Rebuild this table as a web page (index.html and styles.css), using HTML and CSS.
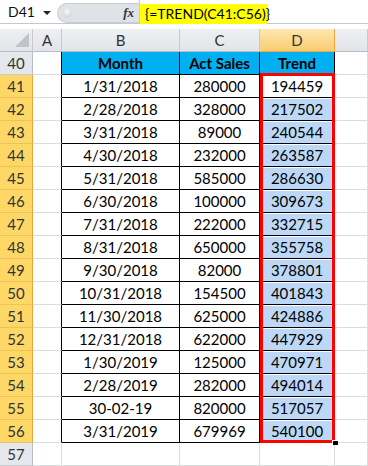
FILE: index.html
```html
<!DOCTYPE html>
<html>
<head>
<meta charset="utf-8">
<link rel="stylesheet" href="styles.css">
</head>
<body>
<div class="fbar">
  <div class="namebox"><span>D41</span><span class="arrow"></span></div>
  <div class="mid"><span class="knob"></span><span class="fx">fx</span></div>
  <div class="formula"><span class="hl">{=TREND(C41:C56)}</span></div>
</div>
<div class="gap"></div>
<div class="sheet">
  <table class="grid">
    <colgroup>
      <col class="c-rh"><col class="c-a"><col class="c-b"><col class="c-c"><col class="c-d"><col class="c-e">
    </colgroup>
    <tr class="colhdr">
      <th class="corner"><span class="tri"></span></th><th>A</th><th>B</th><th>C</th><th class="csel">D</th><th></th>
    </tr>
    <tr>
      <th class="rh">40</th><td class="a"></td><td class="hd">Month</td><td class="hd">Act Sales</td><td class="hd">Trend</td><td></td>
    </tr>
    <tr><th class="rh rsel">41</th><td class="a"></td><td class="t">1/31/2018</td><td class="t">280000</td><td class="t act">194459</td><td></td></tr>
    <tr><th class="rh rsel">42</th><td class="a"></td><td class="t">2/28/2018</td><td class="t">328000</td><td class="t sel">217502</td><td></td></tr>
    <tr><th class="rh rsel">43</th><td class="a"></td><td class="t">3/31/2018</td><td class="t">89000</td><td class="t sel">240544</td><td></td></tr>
    <tr><th class="rh rsel">44</th><td class="a"></td><td class="t">4/30/2018</td><td class="t">232000</td><td class="t sel">263587</td><td></td></tr>
    <tr><th class="rh rsel">45</th><td class="a"></td><td class="t">5/31/2018</td><td class="t">585000</td><td class="t sel">286630</td><td></td></tr>
    <tr><th class="rh rsel">46</th><td class="a"></td><td class="t">6/30/2018</td><td class="t">100000</td><td class="t sel">309673</td><td></td></tr>
    <tr><th class="rh rsel">47</th><td class="a"></td><td class="t">7/31/2018</td><td class="t">222000</td><td class="t sel">332715</td><td></td></tr>
    <tr><th class="rh rsel">48</th><td class="a"></td><td class="t">8/31/2018</td><td class="t">650000</td><td class="t sel">355758</td><td></td></tr>
    <tr><th class="rh rsel">49</th><td class="a"></td><td class="t">9/30/2018</td><td class="t">82000</td><td class="t sel">378801</td><td></td></tr>
    <tr><th class="rh rsel">50</th><td class="a"></td><td class="t">10/31/2018</td><td class="t">154500</td><td class="t sel">401843</td><td></td></tr>
    <tr><th class="rh rsel">51</th><td class="a"></td><td class="t">11/30/2018</td><td class="t">625000</td><td class="t sel">424886</td><td></td></tr>
    <tr><th class="rh rsel">52</th><td class="a"></td><td class="t">12/31/2018</td><td class="t">622000</td><td class="t sel">447929</td><td></td></tr>
    <tr><th class="rh rsel">53</th><td class="a"></td><td class="t">1/30/2019</td><td class="t">125000</td><td class="t sel">470971</td><td></td></tr>
    <tr><th class="rh rsel">54</th><td class="a"></td><td class="t">2/28/2019</td><td class="t">282000</td><td class="t sel">494014</td><td></td></tr>
    <tr><th class="rh rsel">55</th><td class="a"></td><td class="t">30-02-19</td><td class="t">820000</td><td class="t sel">517057</td><td></td></tr>
    <tr><th class="rh rsel">56</th><td class="a"></td><td class="t">3/31/2019</td><td class="t">679969</td><td class="t sel">540100</td><td></td></tr>
    <tr><th class="rh">57</th><td></td><td></td><td></td><td></td><td></td></tr>
  </table>
  <div class="selbox"></div>
  <div class="handle"></div>
</div>
</body>
</html>
```

FILE: styles.css
```css
* { box-sizing: border-box; }
html, body { margin: 0; padding: 0; }
body {
  width: 368px;
  height: 466px;
  overflow: hidden;
  background: #fff;
  font-family: Lato, "Liberation Sans", sans-serif;
  color: #000;
}

/* formula bar */
.fbar {
  display: flex;
  height: 24px;
  border-bottom: 1px solid #c3c8cf;
  background: #fff;
}
.namebox {
  width: 57px;
  display: flex;
  align-items: center;
  justify-content: space-between;
  padding: 0 6px 0 8px;
  font-size: 14px;
  color: #111;
}
.arrow {
  width: 0;
  height: 0;
  border-left: 4px solid transparent;
  border-right: 4px solid transparent;
  border-top: 4px solid #222;
  margin-top: 2px;
}
.mid {
  width: 82px;
  margin-top: 3px;
  height: 20px;
  background: #dfe2e7;
  border-radius: 10px 0 0 10px;
  border: 1px solid #c9cdd3;
  border-right: none;
  display: flex;
  align-items: center;
}
.knob {
  width: 10px;
  height: 10px;
  border-radius: 50%;
  background: radial-gradient(circle at 50% 35%, #f7f8f9, #c5c9cf);
  margin-left: 4px;
}
.fx {
  margin-left: auto;
  margin-right: 5px;
  font: italic bold 13px "Liberation Serif", serif;
  color: #333;
}
.formula {
  flex: 1;
  padding-top: 3px;
  border-left: 1px solid #c9cdd3;
}
.hl {
  display: inline-block;
  width: 127px;
  height: 20px;
  line-height: 20px;
  padding-left: 5px;
  background: #ffff00;
  font-size: 14px;
  white-space: nowrap;
}
.gap {
  height: 5px;
  background: #fff;
}

/* sheet */
.sheet { position: relative; }
.grid {
  border-collapse: separate;
  border-spacing: 0;
  table-layout: fixed;
  width: 368px;
}
.c-rh { width: 33px; }
.c-a { width: 29px; }
.c-b { width: 118px; }
.c-c { width: 80px; }
.c-d { width: 75px; }
.c-e { width: 33px; }

.grid td, .grid th {
  height: 23px;
  padding: 0;
  border-right: 1px solid #dadcdf;
  border-bottom: 1px solid #dadcdf;
  text-align: center;
  vertical-align: middle;
  font-size: 15px;
  font-weight: normal;
  white-space: nowrap;
  overflow: hidden;
}
.colhdr th {
  background: linear-gradient(#eef0f3, #e1e4e8);
  border-right: 1px solid #c6cad0;
  border-bottom: 1px solid #b9bec6;
  color: #333;
}
.colhdr th.csel {
  background: linear-gradient(#fde7ad, #f8cd72);
  border-right: 1px solid #eea743;
  border-bottom: 1px solid #eea743;
  color: #333;
}
.corner { position: relative; }
.tri {
  position: absolute;
  right: 3px;
  bottom: 4px;
  width: 0;
  height: 0;
  border-left: 14px solid transparent;
  border-bottom: 14px solid #c0c4ca;
}
th.rh {
  background: #e4e7eb;
  border-right: 1px solid #b9bec6;
  border-bottom: 1px solid #c6cad0;
  color: #333;
}
th.rh.rsel {
  background: #fdd867;
  border-right: 1px solid #e9a43c;
  border-bottom: 1px solid #efc05d;
  color: #333;
}
td.a { border-right: 1px solid #000; }
td.hd {
  background: #00b0f0;
  font-weight: bold;
  border-right: 1px solid #000;
  border-bottom: 1px solid #000;
}
td.t {
  border-right: 1px solid #000;
  border-bottom: 1px solid #000;
}
td.sel {
  background: #bcd8f6;
  box-shadow: inset 1px 1px 0 #fff;
}

.selbox {
  position: absolute;
  left: 260px;
  top: 44px;
  width: 75px;
  height: 370px;
  border: 3px solid #ff0000;
}
.handle {
  position: absolute;
  left: 332px;
  top: 411px;
  width: 6px;
  height: 5px;
  background: #000;
  border-left: 1px solid #fff;
  border-top: 1px solid #fff;
}
```
